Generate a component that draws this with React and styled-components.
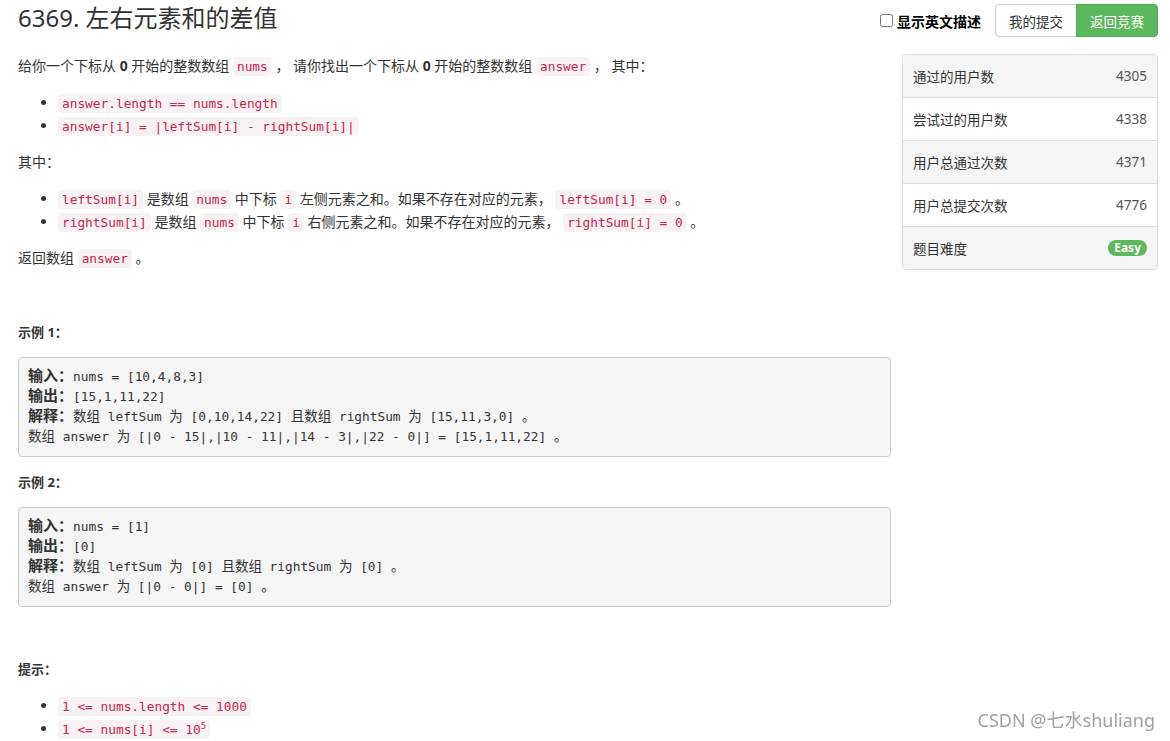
import React from "react";
import styled, { createGlobalStyle } from "styled-components";

const GlobalStyle = createGlobalStyle`
  html, body { margin: 0; padding: 0; background: #fff; }
  body {
    font-family: "Noto Sans", "Open Sans", "Noto Sans CJK SC", sans-serif;
    font-size: 14px;
    color: #333;
  }
`;

const Page = styled.div`
  position: relative;
  display: grid;
  grid-template-columns: 873px 256px;
  column-gap: 11px;
  padding: 0 12px 0 18px;
  box-sizing: border-box;
`;

const Main = styled.div`
  display: flex;
  flex-direction: column;
`;

const Title = styled.h1`
  margin: 5px 0 0;
  font-size: 24px;
  line-height: 26px;
  font-weight: 400;
  color: #333;
  font-family: "Noto Sans", "Noto Sans CJK SC", sans-serif;
`;

const Content = styled.div`
  margin-top: 25px;
  font-size: 14px;
  line-height: 20px;
`;

const P = styled.p`
  margin: 0 0 15px;
  line-height: 20px;
`;

const List = styled.ul`
  margin: 0 0 15px;
  padding-left: 40px;
  list-style: disc;
`;

const Item = styled.li`
  line-height: 23px;
`;

const Code = styled.code`
  font-family: "DejaVu Sans Mono", "Liberation Mono", "Noto Sans CJK SC", monospace;
  font-size: 12.8px;
  line-height: 17px;
  padding: 2px 4px;
  color: #c7254e;
  background: #f9f2f4;
  border-radius: 4px;

  sup {
    font-size: 9px;
    line-height: 0;
    vertical-align: super;
  }
`;

const Strong = styled.strong`
  font-weight: 700;
`;

const ExampleLabel = styled.p`
  margin: ${(p) => p.$top}px 0 15px;
  font-size: 13px;
  line-height: 20px;
  font-weight: 700;
  color: #333;
`;

const Pre = styled.div`
  margin: 0;
  padding: 9px;
  background: #f5f5f5;
  border: 1px solid #ccc;
  border-radius: 4px;
  font-family: "DejaVu Sans Mono", "Liberation Mono", "Noto Sans CJK SC", monospace;
  font-size: 12.8px;
  color: #333;
`;

const PreLine = styled.div`
  height: 20px;
  line-height: 20px;
  white-space: pre;
  overflow: visible;
`;

const PreLabel = styled.strong`
  font-family: "Noto Sans CJK SC", sans-serif;
  font-size: 15px;
  font-weight: 700;
  line-height: 1;
`;

const Cjk = styled.span`
  font-family: "Noto Sans CJK SC", sans-serif;
  font-size: 13.5px;
  line-height: 1;
`;

const Side = styled.div`
  display: flex;
  flex-direction: column;
`;

const Controls = styled.div`
  margin-top: 4px;
  height: 33px;
  display: flex;
  align-items: center;
  justify-content: flex-end;
  margin-left: -40px;
`;

const CheckLabel = styled.label`
  display: flex;
  align-items: center;
  gap: 4px;
  font-size: 14px;
  font-weight: 700;
  color: #000;
  margin-right: 14px;
  font-family: "Noto Sans CJK SC", sans-serif;

  input {
    margin: 0;
    width: 13px;
    height: 13px;
  }
`;

const BtnGroup = styled.div`
  display: flex;
`;

const Btn = styled.button`
  height: 33px;
  padding: 0 13px;
  font-size: 13.5px;
  font-family: "Noto Sans CJK SC", sans-serif;
  border: 1px solid ${(p) => (p.$primary ? "#4cae4c" : "#ccc")};
  background: ${(p) => (p.$primary ? "#5cb85c" : "#fff")};
  color: ${(p) => (p.$primary ? "#fff" : "#333")};
  border-radius: ${(p) => (p.$primary ? "0 4px 4px 0" : "4px 0 0 4px")};
  ${(p) => (p.$primary ? "margin-left: -1px;" : "")}
  cursor: pointer;
`;

const Panel = styled.div`
  margin-top: 17px;
  border: 1px solid #ddd;
  border-radius: 4px;
  overflow: hidden;
`;

const Row = styled.div`
  height: 42px;
  display: flex;
  align-items: center;
  justify-content: space-between;
  padding: 0 10px;
  background: ${(p) => (p.$alt ? "#fff" : "#f5f5f5")};
  border-top: ${(p) => (p.$first ? "none" : "1px solid #ddd")};
  font-size: 13.5px;
  color: #333;
`;

const Value = styled.span`
  color: #555;
`;

const Badge = styled.span`
  display: inline-block;
  padding: 0 6px;
  height: 16px;
  line-height: 16px;
  border-radius: 9px;
  background: #5cb85c;
  color: #fff;
  font-weight: 700;
  font-size: 12px;
`;

const Watermark = styled.div`
  position: fixed;
  right: 15px;
  top: 707px;
  font-size: 18px;
  line-height: 26px;
  color: #a0a0a0;
  font-family: "Noto Sans", "Noto Sans CJK SC", sans-serif;
  text-shadow: 0 0 1px #fff;
  pointer-events: none;
  white-space: nowrap;
`;

const stats = [
  ["通过的用户数", "4305"],
  ["尝试过的用户数", "4338"],
  ["用户总通过次数", "4371"],
  ["用户总提交次数", "4776"],
];

export default function App() {
  return (
    <>
      <GlobalStyle />
      <Page>
        <Main>
          <Title>6369. 左右元素和的差值</Title>
          <Content>
            <P>
              给你一个下标从 <Strong>0</Strong> 开始的整数数组 <Code>nums</Code> ， 请你找出一个下标从 <Strong>0</Strong> 开始的整数数组 <Code>answer</Code> ， 其中：
            </P>
            <List>
              <Item><Code>answer.length == nums.length</Code></Item>
              <Item><Code>answer[i] = |leftSum[i] - rightSum[i]|</Code></Item>
            </List>
            <P>其中：</P>
            <List>
              <Item>
                <Code>leftSum[i]</Code> 是数组 <Code>nums</Code> 中下标 <Code>i</Code> 左侧元素之和。如果不存在对应的元素， <Code>leftSum[i] = 0</Code> 。
              </Item>
              <Item>
                <Code>rightSum[i]</Code> 是数组 <Code>nums</Code> 中下标 <Code>i</Code> 右侧元素之和。如果不存在对应的元素， <Code>rightSum[i] = 0</Code> 。
              </Item>
            </List>
            <P>返回数组 <Code>answer</Code> 。</P>

            <ExampleLabel $top={54}>示例 1：</ExampleLabel>
            <Pre>
              <PreLine><PreLabel>输入：</PreLabel>nums = [10,4,8,3]</PreLine>
              <PreLine><PreLabel>输出：</PreLabel>[15,1,11,22]</PreLine>
              <PreLine><PreLabel>解释：</PreLabel><Cjk>数组</Cjk> leftSum <Cjk>为</Cjk> [0,10,14,22] <Cjk>且数组</Cjk> rightSum <Cjk>为</Cjk> [15,11,3,0] <Cjk>。</Cjk></PreLine>
              <PreLine><Cjk>数组</Cjk> answer <Cjk>为</Cjk> [|0 - 15|,|10 - 11|,|14 - 3|,|22 - 0|] = [15,1,11,22] <Cjk>。</Cjk></PreLine>
            </Pre>

            <ExampleLabel $top={15}>示例 2：</ExampleLabel>
            <Pre>
              <PreLine><PreLabel>输入：</PreLabel>nums = [1]</PreLine>
              <PreLine><PreLabel>输出：</PreLabel>[0]</PreLine>
              <PreLine><PreLabel>解释：</PreLabel><Cjk>数组</Cjk> leftSum <Cjk>为</Cjk> [0] <Cjk>且数组</Cjk> rightSum <Cjk>为</Cjk> [0] <Cjk>。</Cjk></PreLine>
              <PreLine><Cjk>数组</Cjk> answer <Cjk>为</Cjk> [|0 - 0|] = [0] <Cjk>。</Cjk></PreLine>
            </Pre>

            <ExampleLabel $top={52}>提示：</ExampleLabel>
            <List>
              <Item><Code>1 &lt;= nums.length &lt;= 1000</Code></Item>
              <Item><Code>1 &lt;= nums[i] &lt;= 10<sup>5</sup></Code></Item>
            </List>
          </Content>
        </Main>

        <Side>
          <Controls>
            <CheckLabel>
              <input type="checkbox" />
              显示英文描述
            </CheckLabel>
            <BtnGroup>
              <Btn>我的提交</Btn>
              <Btn $primary>返回竞赛</Btn>
            </BtnGroup>
          </Controls>
          <Panel>
            {stats.map(([k, v], i) => (
              <Row key={k} $first={i === 0} $alt={i % 2 === 1}>
                <span>{k}</span>
                <Value>{v}</Value>
              </Row>
            ))}
            <Row $alt={false}>
              <span>题目难度</span>
              <Badge>Easy</Badge>
            </Row>
          </Panel>
        </Side>
      </Page>
      <Watermark>CSDN @七水shuliang</Watermark>
    </>
  );
}
